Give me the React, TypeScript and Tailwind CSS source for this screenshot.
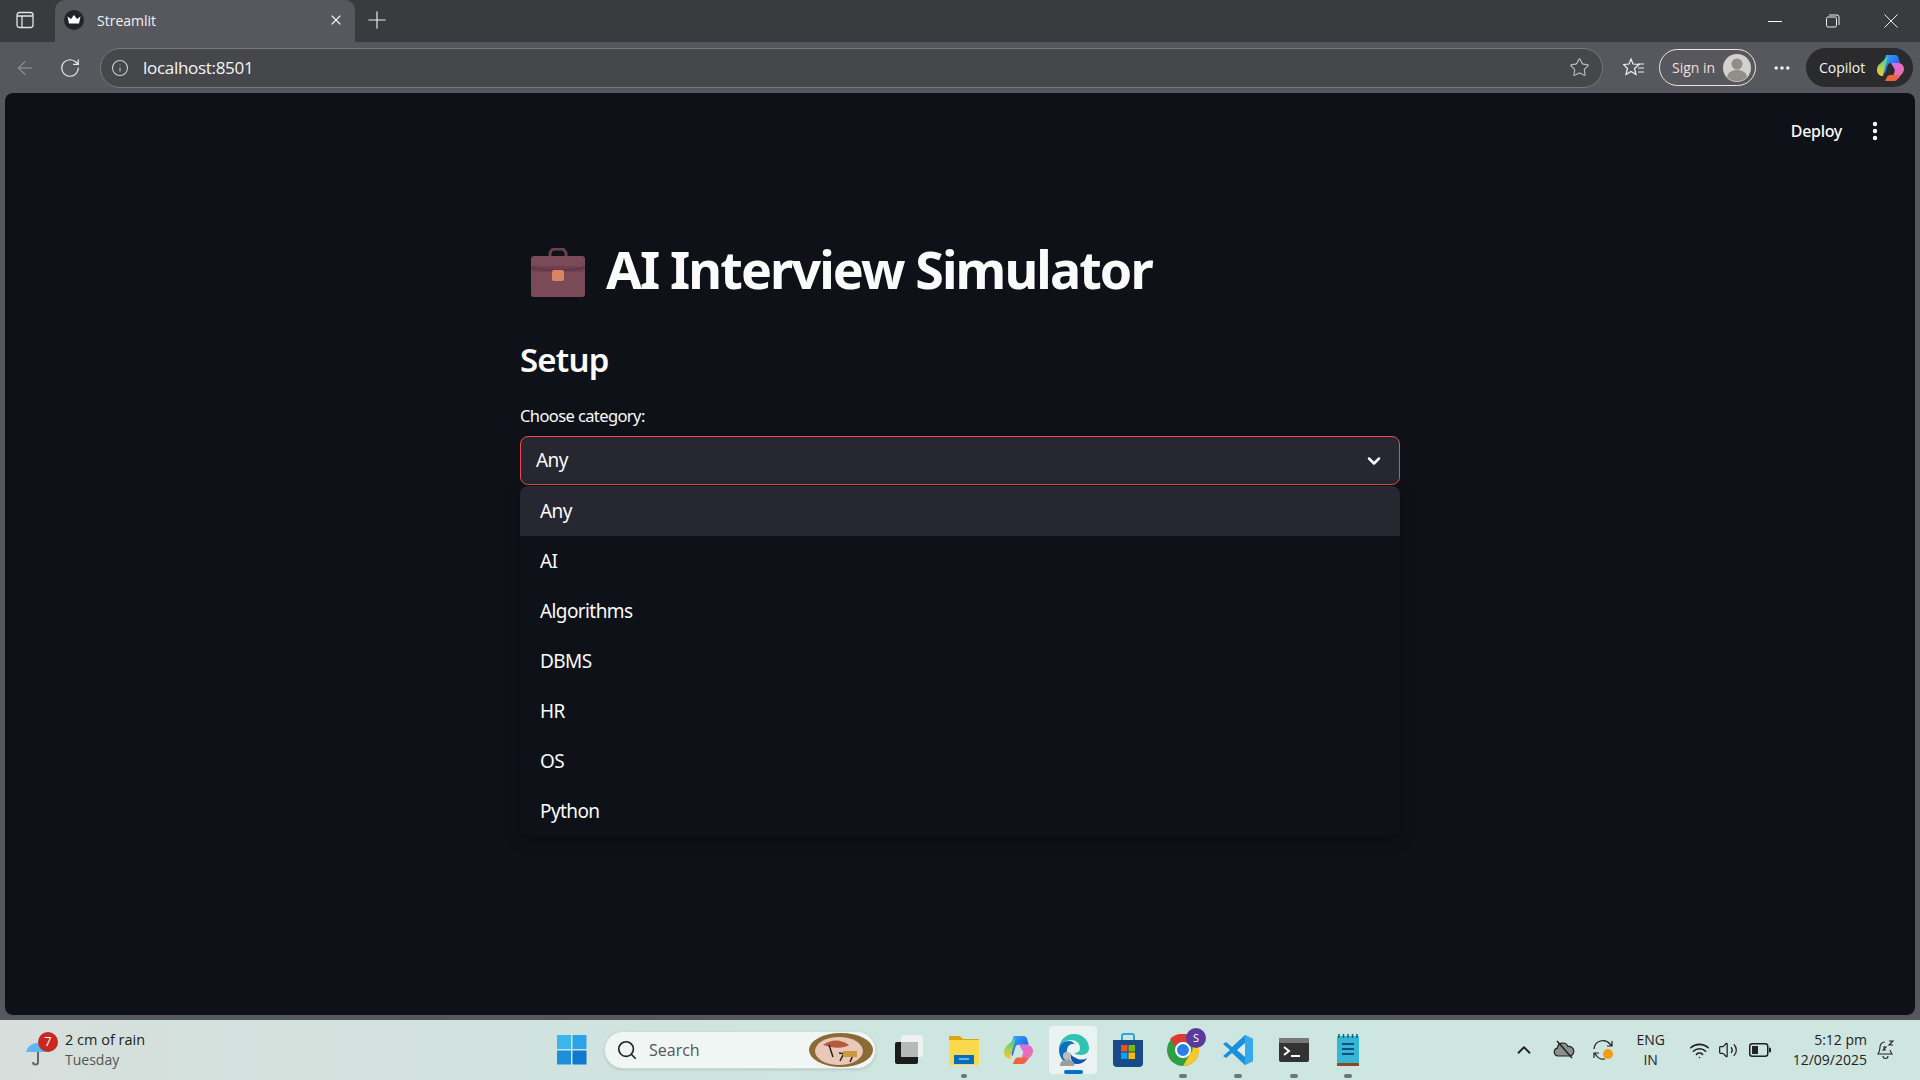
import { ChevronDown, ChevronUp, Info, MoreHorizontal, MoreVertical, Plus, RotateCw, Search, Star, Volume2, Wifi, X, ArrowLeft } from 'lucide-react';

const options = ['Any', 'AI', 'Algorithms', 'DBMS', 'HR', 'OS', 'Python'];

function CrownIcon() {
  return (
    <svg width="20" height="20" viewBox="0 0 20 20">
      <circle cx="10" cy="10" r="10" fill="#22232d" />
      <path d="M3.500 6.500l3.500 2.500L10 5l3 4 3.500-2.500L15 13.500H5z" fill="#fff" />
    </svg>
  );
}

function CopilotIcon({ size = 28 }: { size?: number }) {
  return (
    <svg width={size} height={size} viewBox="0 0 28 28">
      <defs>
        <linearGradient id="cpA" x1="0" y1="0" x2="1" y2="1">
          <stop offset="0" stopColor="#2fb4f5" />
          <stop offset="0.6" stopColor="#2a6cf0" />
          <stop offset="1" stopColor="#2238c8" />
        </linearGradient>
        <linearGradient id="cpB" x1="0" y1="0" x2="1" y2="1">
          <stop offset="0" stopColor="#d56bf0" />
          <stop offset="1" stopColor="#f6708f" />
        </linearGradient>
        <linearGradient id="cpC" x1="0" y1="0" x2="0" y2="1">
          <stop offset="0" stopColor="#37c5b0" />
          <stop offset="0.55" stopColor="#a8d34a" />
          <stop offset="1" stopColor="#f8c33a" />
        </linearGradient>
      </defs>
      <path d="M10 1h9c2 0 3 1 3.600 3L24 9H15c-2 0-3 1-3.600 3L9 20 6 14z" fill="url(#cpA)" />
      <path d="M8 6c1-2 2-3 4-3l-3 10-2 9c-3 0-6-2-6-6 0-2 .6-3.600 1.600-5z" fill="url(#cpC)" />
      <path d="M15 9h7c3 0 6 2 6 6 0 3-2 5-4 7-1 2-3 4-5 4h-3l3-10z" fill="url(#cpB)" />
      <path d="M9 27h9c2 0 3-1 4-3l1-3h-9c-1.500 0-2.500 1-3 2z" fill="#f0643c" />
    </svg>
  );
}

function Briefcase() {
  return (
    <svg width="56" height="50" viewBox="0 0 56 50">
      <path d="M20 9V6a5 5 0 0 1 5-5h6a5 5 0 0 1 5 5v3" fill="none" stroke="#6b4248" strokeWidth="3" />
      <rect x="1" y="8" width="54" height="41" rx="3" fill="#7a4a58" />
      <path d="M1 20c0 3 2 4 5 4h44c3 0 5-1 5-4v-2H1z" fill="#6e4050" />
      <path d="M1 19c8 4 46 4 54 0" fill="none" stroke="#5d3547" strokeWidth="1.500" />
      <rect x="22" y="22" width="12" height="11" rx="2" fill="#d88662" />
    </svg>
  );
}

function TaskbarIcons() {
  return (
    <div className="flex items-center h-full">
      {/* file stack */}
      <div className="ml-[15px] w-[35px] flex justify-center">
        <svg width="34" height="34" viewBox="0 0 34 34">
          <rect x="3" y="9" width="23" height="22" rx="2" fill="#1c1c1c" />
          <rect x="9" y="2" width="22" height="22" rx="2" fill="#f1f3f2" fillOpacity="0.9" />
          <rect x="9" y="9" width="17" height="15" fill="#b7b9b8" />
        </svg>
      </div>
      {/* explorer */}
      <div className="relative ml-[18px] w-[40px] h-full flex justify-center items-center">
        <svg width="34" height="34" viewBox="0 0 34 34">
          <path d="M2 3h11l3 3h16v7H2z" fill="#dfa50f" />
          <rect x="2" y="7" width="30" height="25" fill="#fbd94e" />
          <path d="M7 22h20v9H7z" fill="#0a6cbd" />
          <rect x="12" y="25" width="10" height="2" fill="#68b5ea" />
        </svg>
        <div className="absolute bottom-[2px] w-[6px] h-[4px] rounded-full bg-[#6b7774]" />
      </div>
      {/* copilot */}
      <div className="ml-[19px] w-[30px] flex justify-center">
        <CopilotIcon size={30} />
      </div>
      {/* edge, active */}
      <div className="relative ml-[16px] w-[48px] h-[48px] rounded-[4px] bg-[#eaf3f1] flex justify-center items-center">
        <svg width="32" height="34" viewBox="0 0 32 34">
          <path d="M2 17C2 7 9 1 17 1c8 0 15 6 15 14 0 5-4 7-8 7-3 0-6-1-7-2 3 0 6-1 6-5 0-5-4-8-9-8S2 11 2 17z" fill="#2fc4b2" />
          <path d="M2 17c0-6 5-9 10-9 3 0 5 2 6 3-6-1-9 4-8 10 1 5 5 9 9 10C9 33 2 26 2 17z" fill="#0c6fc0" />
          <path d="M19 31c5 0 9-2 11-6-3 2-8 2-11 0-3-1-5-3-6-5 0 5 2 10 6 11z" fill="#0f55a8" />
          <circle cx="10" cy="23" r="4" fill="#bdbdbd" />
          <path d="M3 33c0-5 3-6 7-6s7 1 7 6z" fill="#9e9e9e" />
        </svg>
        <div className="absolute bottom-0 w-[19px] h-[4px] rounded-full bg-[#0a6fc9]" />
      </div>
      {/* store */}
      <div className="ml-[16px] w-[30px] flex justify-center">
        <svg width="30" height="34" viewBox="0 0 30 34">
          <path d="M9 7V3a2 2 0 0 1 2-2h8a2 2 0 0 1 2 2v4" fill="none" stroke="#2aa7e6" strokeWidth="2" />
          <path d="M0 7h30v23a4 4 0 0 1-4 4H4a4 4 0 0 1-4-4z" fill="#174a86" />
          <rect x="8" y="12" width="6.500" height="6.500" fill="#f25022" />
          <rect x="15.500" y="12" width="6.500" height="6.500" fill="#7fba00" />
          <rect x="8" y="19.500" width="6.500" height="6.500" fill="#00a4ef" />
          <rect x="15.500" y="19.500" width="6.500" height="6.500" fill="#ffb900" />
        </svg>
      </div>
      {/* chrome with profile */}
      <div className="relative ml-[23px] w-[34px] h-full flex justify-center items-center">
        <svg width="34" height="34" viewBox="0 0 34 34">
          <circle cx="17" cy="17" r="16" fill="#2f9e44" />
          <path d="M17 1a16 16 0 0 1 14 8H17a8 8 0 0 0-7.500 5L4 6a16 16 0 0 1 13-5z" fill="#dd3a30" />
          <path d="M31 9a16 16 0 0 1-14 24l7-12a8 8 0 0 0 0-12z" fill="#f7c72d" />
          <circle cx="17" cy="17" r="7" fill="#2b7de9" stroke="#fff" strokeWidth="2" />
        </svg>
        <div className="absolute top-[8px] -right-[6px] w-[20px] h-[20px] rounded-full bg-[#5b3a9e] flex items-center justify-center text-[11px] text-white font-['Open_Sans',sans-serif]">S</div>
        <div className="absolute bottom-[2px] w-[8px] h-[4px] rounded-full bg-[#6b7774]" />
      </div>
      {/* vscode */}
      <div className="relative ml-[22px] w-[32px] h-full flex justify-center items-center">
        <svg width="32" height="32" viewBox="0 0 32 32">
          <path d="M23 1l8 4v22l-8 4-13-12-6 5-3-2 7-6-7-6 3-2 6 5z" fill="#1b8fdc" />
          <path d="M23 1l8 4v22l-8 4z" fill="#35a8ee" />
          <path d="M23 9v14l-8-7z" fill="#d8eef2" />
        </svg>
        <div className="absolute bottom-[2px] w-[8px] h-[4px] rounded-full bg-[#6b7774]" />
      </div>
      {/* terminal */}
      <div className="relative ml-[25px] w-[30px] h-full flex justify-center items-center">
        <svg width="30" height="24" viewBox="0 0 30 24">
          <rect width="30" height="24" rx="2" fill="#333" />
          <rect width="30" height="5" rx="1" fill="#777" />
          <path d="M5 9l5 4-5 4" fill="none" stroke="#fff" strokeWidth="2" />
          <rect x="12" y="17" width="9" height="2" fill="#fff" />
        </svg>
        <div className="absolute bottom-[2px] w-[8px] h-[4px] rounded-full bg-[#6b7774]" />
      </div>
      {/* notepad */}
      <div className="relative ml-[28px] w-[22px] h-full flex justify-center items-center">
        <svg width="22" height="32" viewBox="0 0 22 32">
          <rect y="2" width="22" height="27" rx="1" fill="#35b6d6" />
          <rect y="29" width="22" height="3" fill="#8a4a24" />
          <path d="M2 0v4M6.500 0v4M11 0v4M15.500 0v4M20 0v4" stroke="#0f5f8a" strokeWidth="1.500" />
          <path d="M5 10h12M5 15h12M5 20h12" stroke="#0a4f7c" strokeWidth="2" />
        </svg>
        <div className="absolute bottom-[2px] w-[8px] h-[4px] rounded-full bg-[#6b7774]" />
      </div>
    </div>
  );
}

export default function App() {
  return (
    <div className="w-[1920px] h-[1080px] overflow-hidden flex flex-col bg-[#57585d] font-['Noto_Sans',sans-serif]">
      {/* tab strip */}
      <div className="h-[42px] shrink-0 bg-[#3a3b3f] flex items-center text-white font-['Open_Sans',sans-serif]">
        <div className="w-[50px] flex justify-center pb-[2px]">
          <svg width="18" height="18" viewBox="0 0 18 18" fill="none" stroke="#e4e4e4" strokeWidth="1.300">
            <rect x="1" y="1.500" width="16" height="15" rx="2.500" />
            <path d="M1 5h16M6 5v11.500" />
          </svg>
        </div>
        <div className="ml-[5px] w-[300px] h-full bg-[#57585d] rounded-t-[10px] flex items-center pl-[9px] pr-[11px] pb-[2px]">
          <CrownIcon />
          <span className="ml-[13px] text-[14px] text-[#f2f2f2]">Streamlit</span>
          <X className="ml-auto" size={16} strokeWidth={1.800} color="#f0f0f0" />
        </div>
        <Plus className="ml-[8px] mb-[3px]" size={28} strokeWidth={1} color="#eee" />
        <div className="ml-auto flex items-center h-full">
          <div className="w-[14px] h-px bg-white mr-[44px]" />
          <svg width="14" height="14" viewBox="0 0 14 14" fill="none" stroke="#eee" strokeWidth="1" className="mr-[44px]">
            <rect x="0.500" y="3" width="10" height="10" rx="1.500" />
            <path d="M3 1h8a2 2 0 0 1 2 2v8" />
          </svg>
          <svg width="14" height="14" viewBox="0 0 14 14" stroke="#eee" strokeWidth="1" className="mr-[22px]">
            <path d="M0.500 0.500l13 13M13.500 0.500l-13 13" />
          </svg>
        </div>
      </div>

      {/* toolbar */}
      <div className="h-[51px] shrink-0 flex items-center text-white font-['Open_Sans',sans-serif]">
        <ArrowLeft className="ml-[14px]" size={22} strokeWidth={1.100} color="#9b9ca0" />
        <RotateCw className="ml-[23px]" size={22} strokeWidth={1.300} color="#eee" />
        <div className="ml-[19px] w-[1503px] h-[40px] rounded-full bg-[#46474b] border border-[#77787c] flex items-center pl-[10px] pr-[12px]">
          <Info size={18} strokeWidth={1.400} color="#d0d0d0" />
          <span className="ml-[14px] text-[17px] text-[#f5f5f5] tracking-[-0.3px]">localhost:8501</span>
          <Star className="ml-auto" size={21} strokeWidth={1.200} color="#c4c4c6" />
        </div>
        <svg width="22" height="22" viewBox="0 0 22 22" fill="none" stroke="#f2f2f2" strokeWidth="1.200" className="ml-[20px]">
          <path d="M8 2l2 5 6 .5-4.500 4 1.500 6-5-3-5 3 1.500-6L.5 7.500l5.500-.5z" />
          <path d="M15 7h6M15 11h6M15 15h6" />
        </svg>
        <div className="ml-[14px] w-[97px] h-[37px] rounded-full border border-[#f2e3e0] flex items-center pl-[12px] pr-[4px] justify-between">
          <span className="text-[14px] text-[#efdfdc]">Sign in</span>
          <svg width="28" height="28" viewBox="0 0 28 28">
            <circle cx="14" cy="14" r="14" fill="#d3d1cc" />
            <circle cx="14" cy="10" r="5.500" fill="#8f8e89" />
            <path d="M4 23c1-5 5-7 10-7s9 2 10 7a14 14 0 0 1-20 0z" fill="#8f8e89" />
          </svg>
        </div>
        <MoreHorizontal className="ml-[16px]" size={20} strokeWidth={2.200} color="#f2f2f2" />
        <div className="ml-[14px] w-[107px] h-[39px] rounded-full bg-[#2b2b2d] flex items-center pl-[13px] pr-[9px] justify-between">
          <span className="text-[14px] text-[#f4f4f4]">Copilot</span>
          <CopilotIcon />
        </div>
      </div>

      {/* page */}
      <div className="h-[922px] shrink-0 mx-[5px] rounded-[8px] bg-[#0e1117] flex flex-col text-[#fafafa] tracking-[-0.6px]">
        <div className="flex justify-end items-center pt-[26px] pr-[28px] text-[16px] font-medium">
          <span className="tracking-[-0.3px]">Deploy</span>
          <MoreVertical className="ml-[21px]" size={24} strokeWidth={2.400} />
        </div>
        <div className="w-[880px] mx-auto mt-[100px] relative">
          <div className="flex items-center pl-[10px] h-[60px]">
            <Briefcase />
            <h1 className="ml-[20px] mb-[8px] text-[52px] leading-none font-bold tracking-[-1.9px] whitespace-nowrap">AI Interview Simulator</h1>
          </div>
          <h2 className="mt-[34px] text-[33px] leading-[46px] font-semibold tracking-[-0.8px]">Setup</h2>
          <label className="block mt-[21px] text-[16.5px] leading-[24px]">Choose category:</label>
          <div className="mt-[8px] h-[49px] rounded-[8px] bg-[#262730] border border-[#ee4a4e] flex items-center pl-[15px] pr-[15px] text-[19px]">
            <span>Any</span>
            <ChevronDown className="ml-auto" size={20} strokeWidth={3} />
          </div>
          <div className="mt-[1px] rounded-[8px] bg-[#0e1117] shadow-[0_4px_16px_rgba(0,0,0,0.35)] overflow-hidden">
            {options.map((option, index) => (
              <div
                key={option}
                className={`h-[50px] pl-[20px] flex items-center text-[19px] ${index === 0 ? 'bg-[#262730]' : ''}`}
              >
                {option}
              </div>
            ))}
          </div>
        </div>
      </div>

      {/* taskbar */}
      <div className="mt-[5px] flex-1 bg-gradient-to-r from-[#d6dfdc] via-[#cde6e0] to-[#cfe5e0] flex items-center text-[#1c1c1c] font-['Open_Sans',sans-serif]">
        <div className="w-[557px] h-full flex items-center">
          <div className="relative ml-[26px] w-[26px] h-[30px]">
            <svg width="24" height="26" viewBox="0 0 24 26" className="mt-[5px]">
              <path d="M0 12C2 5 7 3 12 3s10 2 12 9z" fill="#63b5f0" />
              <path d="M12 12v10a2.500 2.500 0 0 1-5 0" fill="none" stroke="#666" strokeWidth="2" />
            </svg>
            <div className="absolute -top-[3px] left-[12px] w-[20px] h-[20px] rounded-full bg-[#c8281f] flex items-center justify-center text-[13px] text-white">7</div>
          </div>
          <div className="ml-[13px] flex flex-col text-[14.5px] leading-[20px]">
            <span className="text-[#222]">2 cm of rain</span>
            <span className="text-[#555] text-[14px]">Tuesday</span>
          </div>
        </div>
        <svg width="30" height="30" viewBox="0 0 30 30">
          <rect x="0" y="0" width="14" height="14" fill="#3ab8ee" />
          <rect x="15.500" y="0" width="14" height="14" fill="#2aa4e6" />
          <rect x="0" y="15.500" width="14" height="14" fill="#1e8fdc" />
          <rect x="15.500" y="15.500" width="14" height="14" fill="#0f79cf" />
        </svg>
        <div className="ml-[17px] w-[272px] h-[38px] rounded-full bg-[#f0f6f4] border border-[#cfdcd9] shadow-sm flex items-center pl-[11px] pr-[2px]">
          <Search size={22} strokeWidth={1.800} color="#222" />
          <span className="ml-[11px] text-[16px] text-[#555]">Search</span>
          <svg width="64" height="34" viewBox="0 0 64 34" className="ml-auto">
            <ellipse cx="32" cy="17" rx="32" ry="17" fill="#8a6a35" />
            <ellipse cx="30" cy="18" rx="24" ry="14" fill="#e8c8b8" />
            <path d="M14 12c8-6 18-6 26 0-6 4-16 3-26 0z" fill="#b65a3c" />
            <path d="M20 12l4 12M30 20l14 2-3 7M34 22l-3 6" stroke="#2a2018" strokeWidth="1.500" fill="none" />
            <path d="M34 18h14v6H34z" fill="#c89a3a" />
          </svg>
        </div>
        <TaskbarIcons />
        <div className="ml-auto flex items-center h-full pr-[25px]">
          <ChevronUp size={22} strokeWidth={2} color="#222" />
          {/* onedrive offline */}
          <svg width="22" height="20" viewBox="0 0 22 20" className="ml-[18px]">
            <path d="M5 16a4 4 0 0 1-.6-7.900A5.500 5.500 0 0 1 15 6.500 4.800 4.800 0 0 1 17 16z" fill="#8b8f8d" stroke="#222" strokeWidth="1.200" />
            <path d="M4 1l15 17" stroke="#222" strokeWidth="1.500" />
          </svg>
          {/* sync with orange dot */}
          <svg width="24" height="24" viewBox="0 0 24 24" fill="none" stroke="#222" strokeWidth="1.200" className="ml-[17px]">
            <path d="M2 11a9 9 0 0 1 16-5l2 2M20 3v5h-5" />
            <path d="M13 21a9 9 0 0 1-9-4l-2-2M2 20v-5h5" />
            <circle cx="16" cy="16" r="5" fill="#f59c10" stroke="none" />
          </svg>
          <div className="ml-[15px] w-[40px] flex flex-col items-center text-[14px] leading-[20px] text-[#222]">
            <span>ENG</span>
            <span>IN</span>
          </div>
          <Wifi className="ml-[18px]" size={21} strokeWidth={1.800} color="#222" />
          <Volume2 className="ml-[8px]" size={20} strokeWidth={1.500} color="#222" />
          <svg width="22" height="14" viewBox="0 0 22 14" className="ml-[11px]">
            <rect x="0.750" y="0.750" width="18" height="12.500" rx="2.500" fill="none" stroke="#222" strokeWidth="1.500" />
            <rect x="3" y="3" width="6" height="8" fill="#222" />
            <rect x="20" y="4.500" width="2" height="5" rx="1" fill="#222" />
          </svg>
          <div className="ml-[22px] flex flex-col items-end text-[14px] leading-[20px] text-[#222]">
            <span>5:12 pm</span>
            <span>12/09/2025</span>
          </div>
          {/* notification bell, snoozed */}
          <svg width="18" height="20" viewBox="0 0 18 20" fill="none" stroke="#222" strokeWidth="1.100" className="ml-[10px]">
            <path d="M8 2a5 5 0 0 0-5 5c0 4-1 5-2 7h14c-1-1.500-1.700-2.500-2-4" />
            <path d="M6 16a2.500 2.500 0 0 0 5 0" />
            <path d="M6 7h3l-3 3h3M12 1h4l-4 4h4" />
          </svg>
        </div>
      </div>
    </div>
  );
}
